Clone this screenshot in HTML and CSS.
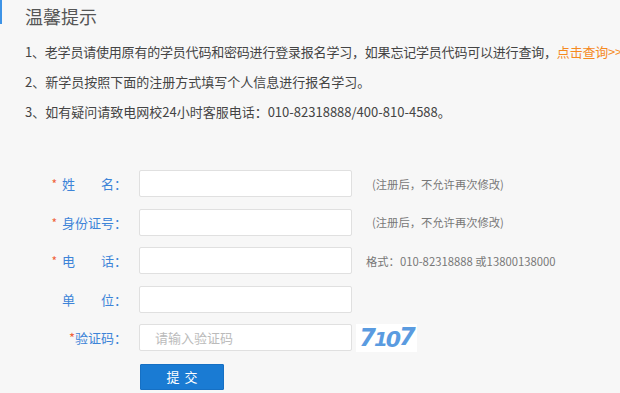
FILE: index.html
```html
<!DOCTYPE html>
<html lang="zh">
<head>
<meta charset="utf-8">
<link rel="stylesheet" href="styles.css">
</head>
<body>
<div class="page">
  <div class="head"><span class="head-title">温馨提示</span></div>
  <div class="notes">
    <p class="tight">1、老学员请使用原有的学员代码和密码进行登录报名学习，如果忘记学员代码可以进行查询，<a class="link">点击查询&gt;&gt;</a></p>
    <p>2、新学员按照下面的注册方式填写个人信息进行报名学习。</p>
    <p>3、如有疑问请致电网校24小时客服电话：010-82318888/400-810-4588。</p>
  </div>
  <form class="form">
    <div class="row">
      <label class="label"><span class="req">*</span>姓　　名：</label>
      <input class="field" type="text">
      <span class="hint hint-paren">(注册后，不允许再次修改)</span>
    </div>
    <div class="row">
      <label class="label"><span class="req">*</span>身份证号：</label>
      <input class="field" type="text">
      <span class="hint hint-paren">(注册后，不允许再次修改)</span>
    </div>
    <div class="row">
      <label class="label"><span class="req">*</span>电　　话：</label>
      <input class="field" type="text">
      <span class="hint">格式：010-82318888 或13800138000</span>
    </div>
    <div class="row">
      <label class="label">单　　位：</label>
      <input class="field" type="text">
    </div>
    <div class="row">
      <label class="label"><span class="req req-tight">*</span>验证码：</label>
      <input class="field field-code" type="text" placeholder="请输入验证码">
      <span class="captcha"><span class="d1">7</span><span class="d2">1</span><span class="d3">0</span><span class="d4">7</span></span>
    </div>
    <div class="row row-btn">
      <span class="label"></span>
      <button class="submit" type="button">提交</button>
    </div>
  </form>
</div>
</body>
</html>
```
FILE: styles.css
```css
html, body {
  margin: 0;
  padding: 0;
  background: #f7f7f7;
  overflow: hidden;
}
body {
  font-family: "Noto Sans CJK SC", "Noto Sans", sans-serif;
  color: #444;
}
.page {
  width: 620px;
  height: 393px;
  overflow: hidden;
}
.head {
  display: flex;
  align-items: flex-start;
  height: 28px;
}
.head::before {
  content: "";
  display: block;
  width: 2px;
  height: 24px;
  background: #3d93e6;
}
.head-title {
  margin-left: 23px;
  margin-top: 4px;
  font-size: 18px;
  line-height: 24px;
  color: #555;
}
.notes {
  margin-top: 9px;
  padding-left: 25px;
  font-size: 13px;
  color: #444;
}
.notes p {
  margin: 0;
  line-height: 30px;
  height: 30px;
  white-space: nowrap;
}
.notes .tight {
  letter-spacing: -0.2px;
}
.link {
  color: #f5891e;
}
.form {
  margin-top: 43px;
  display: flex;
  flex-direction: column;
  gap: 11.5px;
}
.row {
  display: flex;
  align-items: center;
  height: 27px;
}
.label {
  width: 127px;
  flex: none;
  text-align: right;
  font-size: 13px;
  color: #3d84d8;
  white-space: nowrap;
}
.req {
  color: #f0623a;
  font-size: 12px;
  margin-right: 5px;
}
.req-tight {
  margin-right: 0;
  font-size: 13px;
}
.field {
  box-sizing: border-box;
  margin: 0 0 0 12px;
  width: 213px;
  height: 27px;
  border: 1px solid #e0e0e0;
  border-radius: 2px;
  background: #fff;
  padding: 0 15px;
  font-family: inherit;
  font-size: 13px;
  outline: none;
}
.field::placeholder {
  color: #bbb;
}
.hint {
  margin-left: 14px;
  font-size: 11.3px;
  color: #777;
  white-space: nowrap;
}
.hint-paren {
  margin-left: 20px;
}
.captcha {
  margin-left: 4px;
  width: 61px;
  height: 28px;
  background: #fff;
  display: flex;
  align-items: center;
  justify-content: center;
  font-family: "DejaVu Sans", sans-serif;
  font-style: oblique;
  font-weight: bold;
  font-size: 24px;
  color: #5a9be0;
  letter-spacing: -2px;
}
.captcha .d2 { position: relative; top: 1px; font-size: 20px; }
.captcha .d3 { position: relative; top: 2px; font-size: 22px; }
.captcha .d4 { position: relative; top: -1px; }
.row-btn {
  margin-top: 1px;
  height: 26px;
}
.submit {
  margin-left: 13px;
  width: 84px;
  height: 26px;
  border: 1px solid #1670c4;
  background: #1a7bd3;
  color: #fff;
  font-family: inherit;
  font-size: 13px;
  letter-spacing: 5px;
  text-indent: 5px;
  padding: 0;
  border-radius: 1px;
}
```
